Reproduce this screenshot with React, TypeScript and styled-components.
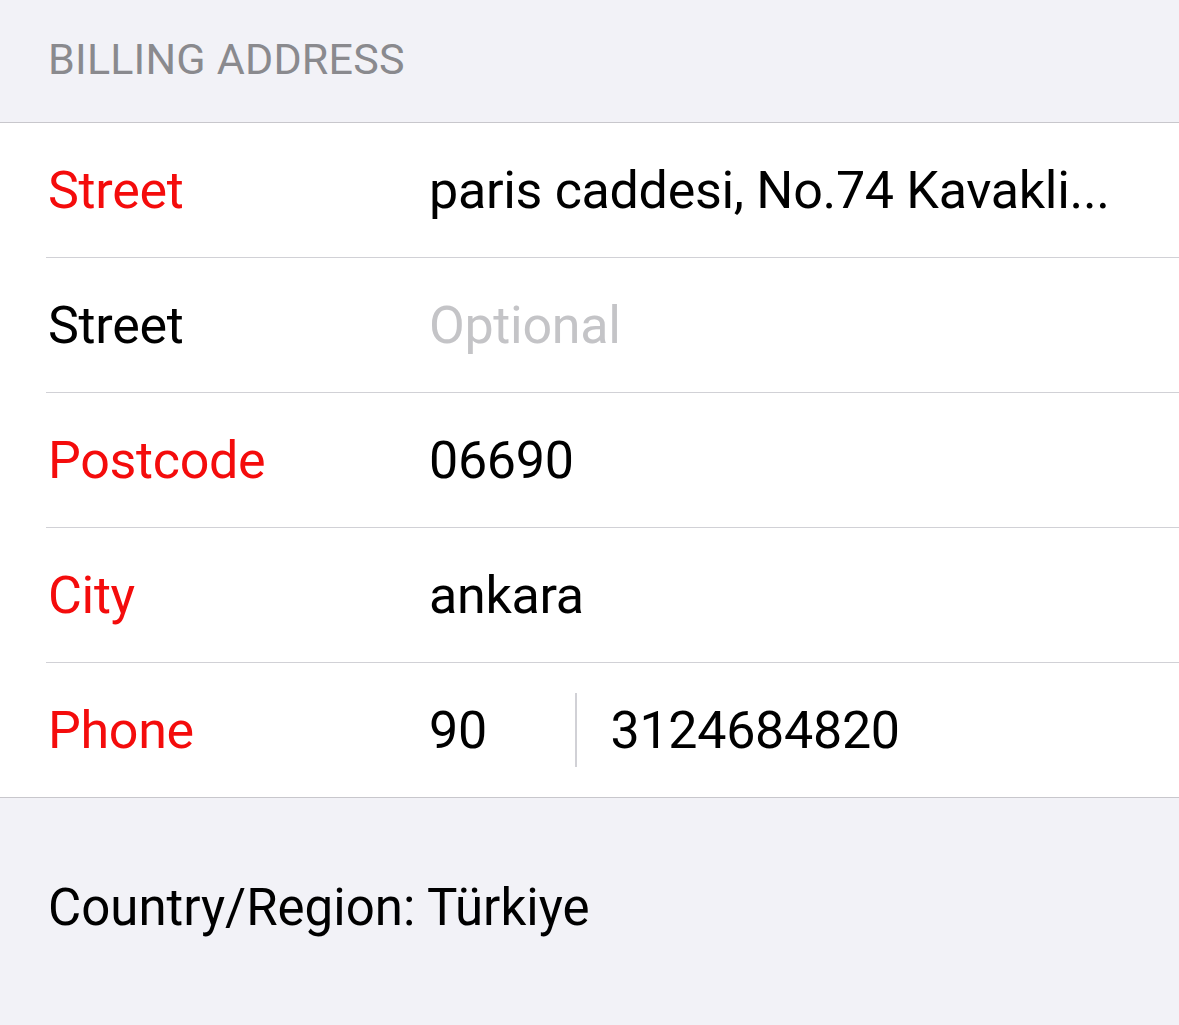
import React from "react";
import styled, { createGlobalStyle } from "styled-components";

const Global = createGlobalStyle`
  html, body { margin: 0; padding: 0; background: #f2f2f7; }
  body { font-family: Roboto, "Liberation Sans", Arial, sans-serif; -webkit-font-smoothing: antialiased; }
`;

const Page = styled.div`
  width: 1179px;
  height: 1025px;
  background: #f2f2f7;
  display: flex;
  flex-direction: column;
`;

const SectionHeader = styled.div`
  height: 123px;
  box-sizing: border-box;
  padding: 34px 0 0 48px;
  font-size: 43px;
  color: #8a8a8e;
  letter-spacing: 0.2px;
  border-bottom: 1.5px solid #c8c7cc;
  line-height: 50px;
`;

const List = styled.div`
  background: #ffffff;
  padding-left: 46px;
  border-bottom: 1.5px solid #c8c7cc;
`;

const Row = styled.div<{ $last?: boolean }>`
  height: 134px;
  display: flex;
  align-items: center;
  border-bottom: ${(p) => (p.$last ? "none" : "1.5px solid #d1d1d6")};
  font-size: 52px;
  letter-spacing: -0.3px;
`;

const Label = styled.div<{ $required?: boolean }>`
  width: 383px;
  padding-left: 2px;
  box-sizing: border-box;
  color: ${(p) => (p.$required ? "#f40c0c" : "#000000")};
  flex-shrink: 0;
`;

const Value = styled.div<{ $placeholder?: boolean }>`
  color: ${(p) => (p.$placeholder ? "#c4c4c7" : "#000000")};
  white-space: nowrap;
`;

const CodeCell = styled.div`
  width: 146px;
  flex-shrink: 0;
`;

const Divider = styled.div`
  width: 1.5px;
  height: 74px;
  background: #d1d1d6;
  margin-right: 34px;
`;

const Footer = styled.div`
  padding: 82px 0 0 48px;
  font-size: 51px;
  color: #000;
  line-height: 56px;
`;

const rows = [
  { label: "Street", required: true, value: "paris caddesi, No.74 Kavakli..." },
  { label: "Street", required: false, value: "Optional", placeholder: true },
  { label: "Postcode", required: true, value: "06690" },
  { label: "City", required: true, value: "ankara" },
];

export default function App() {
  return (
    <Page>
      <Global />
      <SectionHeader>BILLING ADDRESS</SectionHeader>
      <List>
        {rows.map((r, i) => (
          <Row key={i}>
            <Label $required={r.required}>{r.label}</Label>
            <Value $placeholder={r.placeholder}>{r.value}</Value>
          </Row>
        ))}
        <Row $last>
          <Label $required>Phone</Label>
          <CodeCell>90</CodeCell>
          <Divider />
          <Value>3124684820</Value>
        </Row>
      </List>
      <Footer>Country/Region: Türkiye</Footer>
    </Page>
  );
}
